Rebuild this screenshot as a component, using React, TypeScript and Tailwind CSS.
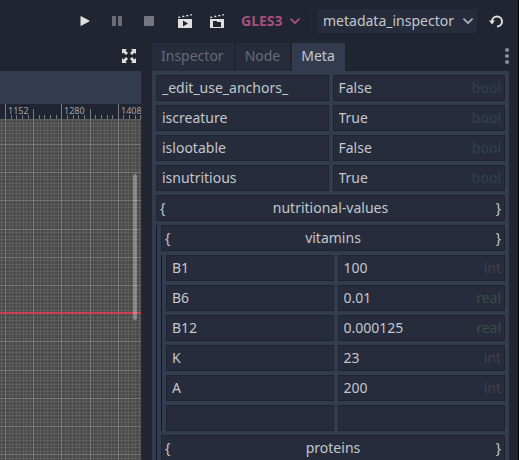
import React, { useId } from "react";

type Kind = "bool" | "int" | "real";

const KIND_COLOR: Record<Kind, string> = {
  bool: "text-[#304152]",
  int: "text-[#443d50]",
  real: "text-[#3a4e45]",
};

const CELL = "flex h-[26px] min-w-0 items-center border border-[#1f2432] bg-[#262c3b]";
const INPUT = "w-full min-w-0 flex-1 bg-transparent pl-[5px] outline-none";

function Entry({ name, value, kind }: { name: string; value: string; kind?: Kind }) {
  const id = useId();
  return (
    <div className="grid grid-cols-2 gap-1">
      <div className={CELL}>
        <input className={INPUT} defaultValue={name} aria-label="Key" />
      </div>
      <div className={CELL}>
        <input id={id} className={INPUT} defaultValue={value} aria-label={`Value of ${name || "new entry"}`} />
        {kind && (
          <label htmlFor={id} className={`shrink-0 pr-[3px] ${KIND_COLOR[kind]}`}>
            {kind}
          </label>
        )}
      </div>
    </div>
  );
}

function Group({ name, children }: { name: string; children?: React.ReactNode }) {
  return (
    <div className="flex flex-col gap-1">
      <button className={`${CELL} justify-between px-[3px]`}>
        <span>{"{"}</span>
        <span>{name}</span>
        <span>{"}"}</span>
      </button>
      {children && <div className="flex flex-col gap-1 border-l border-[#0d1a2b] pl-1">{children}</div>}
    </div>
  );
}

function Chevron({ className }: { className: string }) {
  return (
    <svg className={`pointer-events-none absolute ${className}`} width="10" height="7" viewBox="0 0 10 7" fill="none" stroke="currentColor" strokeWidth="1.8" strokeLinecap="round" strokeLinejoin="round">
      <path d="M1 1.2l4 4 4-4" />
    </svg>
  );
}

function Clapper({ children }: { children: React.ReactNode }) {
  return (
    <svg width="16" height="16" viewBox="0 0 16 16">
      <path d="M1 3.8l2-.4.6 1.3-2 .5zM5 3l2-.4.6 1.3-2 .4zM9 2.2l2-.4.6 1.3-2 .4zM13 1.4l1.700-.3.3 1.300-1.400.3z" fill="#e0e0e0" />
      <path d="M1 6h14v8.500q0 .5-.5.5h-13q-.5 0-.5-.5z" fill="#e0e0e0" />
      {children}
    </svg>
  );
}

const STEP = 28.2;
const ORIGIN = 5.5;

function Ruler() {
  const ticks = Array.from({ length: 80 }, (_, i) => i - 1);
  return (
    <svg className="block h-[15px] w-full bg-[#202531]" aria-label="Horizontal ruler">
      {ticks.map((i) => {
        const x = Math.round(ORIGIN + (i * STEP) / 5 - 0.5) + 0.5;
        const top = i % 10 === 0 ? 0 : i % 5 === 0 ? 5 : 11;
        return <line key={i} x1={x} x2={x} y1={top} y2="15" stroke="#777b84" />;
      })}
      {[1152, 1280, 1408].map((n, i) => (
        <text key={n} x={8 + Math.round(i * STEP * 2)} y="10" fontSize="9" fill="#a1a4aa">
          {n}
        </text>
      ))}
    </svg>
  );
}

function Canvas() {
  const lines = Array.from({ length: 160 }, (_, i) => i - 8);
  return (
    <svg className="absolute inset-0 h-full w-full" aria-label="Scene canvas">
      <g shapeRendering="crispEdges">
        {lines.map((i) => {
          const p = Math.round((i * STEP) / 8);
          const major = i % 8 === 0;
          return (
            <g key={i} stroke="#ffffff" strokeOpacity={major ? 0.22 : 0.08}>
              <line x1={p + ORIGIN} x2={p + ORIGIN} y1="0" y2="100%" />
              <line x1="0" x2="100%" y1={p + 25.5} y2={p + 25.5} />
            </g>
          );
        })}
      </g>
      <line x1="0" x2="100%" y1="194" y2="194" stroke="#d83c55" strokeWidth="2" strokeOpacity="0.9" />
    </svg>
  );
}

const ICON_BUTTON = "flex size-4 items-center justify-center";
const TAB = "pb-0.5 pl-[9px] pr-[10px]";

function Toolbar() {
  return (
    <header className="flex h-[43px] shrink-0 items-center justify-end pb-0.5 pr-[14px]">
      <div className="flex items-center gap-4">
        <button aria-label="Play" className={ICON_BUTTON}>
          <svg width="16" height="16" viewBox="0 0 16 16">
            <path d="M3.500 3.600v8.800q0 .7.7.4l8-4.300q.7-.5 0-.9l-8-4.400q-.7-.3-.7.4z" fill="#e0e0e0" />
          </svg>
        </button>
        <button aria-label="Pause" className={ICON_BUTTON}>
          <svg width="16" height="16" viewBox="0 0 16 16" fill="#6a6d76">
            <rect x="3" y="3" width="4" height="10" rx=".5" />
            <rect x="9" y="3" width="4" height="10" rx=".5" />
          </svg>
        </button>
        <button aria-label="Stop" className={ICON_BUTTON}>
          <svg width="16" height="16" viewBox="0 0 16 16">
            <rect x="3" y="3" width="10" height="10" rx="1" fill="#74777e" />
          </svg>
        </button>
      </div>
      <div className="ml-5 flex items-center gap-4">
        <button aria-label="Play scene" className={ICON_BUTTON}>
          <Clapper>
            <path d="M6 7.500v6l5-3z" fill="#202531" />
          </Clapper>
        </button>
        <button aria-label="Play custom scene" className={ICON_BUTTON}>
          <Clapper>
            <path d="M4 8h3.500l1 1H12v5H4z" fill="#202531" />
          </Clapper>
        </button>
      </div>
      <div className="relative ml-4 text-[#a6507b]">
        <select aria-label="Renderer" className="block w-[59px] appearance-none bg-transparent font-bold outline-none">
          <option>GLES3</option>
        </select>
        <Chevron className="right-0 top-[7px]" />
      </div>
      <div className="ml-[10px] h-6 w-px bg-[#272b37]" />
      <div className="relative ml-[7px]">
        <select aria-label="Layout" className="block h-6 w-[159px] appearance-none bg-[#262c3b] pl-[5px] outline-none">
          <option>metadata_inspector</option>
        </select>
        <Chevron className="right-1 top-[9px] text-[#a9acb2]" />
      </div>
      <button aria-label="Reload" className="ml-[11px] flex size-4 items-center justify-center">
        <svg width="16" height="16" viewBox="0 0 16 16" fill="none">
          <path d="M4 8.500a5 5 0 1 1 5 5" stroke="#e0e0e0" strokeWidth="2" />
          <path d="M1 7.500h6l-3 4z" fill="#e0e0e0" />
        </svg>
      </button>
    </header>
  );
}

export default function App() {
  return (
    <div className="flex h-screen flex-col overflow-hidden border-r border-black bg-[#202531] font-['Noto_Sans',sans-serif] text-[14px] leading-5 text-[#c4c6cb]">
      <Toolbar />
      <div className="flex min-h-0 flex-1 gap-[10px] pr-[9px]">
        <main className="flex min-w-0 flex-1 flex-col">
          <div className="flex h-7 shrink-0 items-center justify-end pb-0.5 pr-[5px]">
            <button aria-label="Distraction free mode">
              <svg width="16" height="16" viewBox="0 0 16 16" fill="#e0e0e0">
                <path id="corner" d="M1 1h5L4.500 2.500 7 5 5 7 2.500 4.500 1 6z" />
                <use href="#corner" transform="rotate(90 8 8)" />
                <use href="#corner" transform="rotate(180 8 8)" />
                <use href="#corner" transform="rotate(270 8 8)" />
              </svg>
            </button>
          </div>
          <div className="flex min-h-0 flex-1 flex-col border-r border-[#262c3b]">
            <div className="h-[33px] shrink-0 bg-[#333b4f]" />
            <Ruler />
            <div className="relative min-h-0 flex-1 bg-[#4b4b4b]">
              <Canvas />
              <div className="absolute right-1 top-[55px] h-[146px] w-1 rounded-sm bg-white/30" />
            </div>
          </div>
        </main>
        <aside className="flex w-[357px] shrink-0 flex-col">
          <div className="flex h-7 shrink-0 justify-between">
            <div role="tablist" className="flex gap-0.5">
              <button role="tab" className={`bg-[#262c3b] text-[#666b77] ${TAB}`}>Inspector</button>
              <button role="tab" className={`bg-[#262c3b] text-[#666b77] ${TAB}`}>Node</button>
              <button role="tab" aria-selected="true" className={`bg-[#333b4f] ${TAB}`}>Meta</button>
            </div>
            <button aria-label="Dock options" className="pb-0.5">
              <svg width="4" height="16" viewBox="0 0 4 16" fill="#8a8d94">
                <circle cx="2" cy="2" r="2" />
                <circle cx="2" cy="8" r="2" />
                <circle cx="2" cy="14" r="2" />
              </svg>
            </button>
          </div>
          <div className="flex min-h-0 flex-1 flex-col gap-1 overflow-hidden bg-[#333b4f] p-1 pb-0">
            <Entry name="_edit_use_anchors_" value="False" kind="bool" />
            <Entry name="iscreature" value="True" kind="bool" />
            <Entry name="islootable" value="False" kind="bool" />
            <Entry name="isnutritious" value="True" kind="bool" />
            <Group name="nutritional-values">
              <Group name="vitamins">
                <Entry name="B1" value="100" kind="int" />
                <Entry name="B6" value="0.01" kind="real" />
                <Entry name="B12" value="0.000125" kind="real" />
                <Entry name="K" value="23" kind="int" />
                <Entry name="A" value="200" kind="int" />
                <Entry name="" value="" />
              </Group>
              <Group name="proteins" />
            </Group>
          </div>
        </aside>
      </div>
    </div>
  );
}
